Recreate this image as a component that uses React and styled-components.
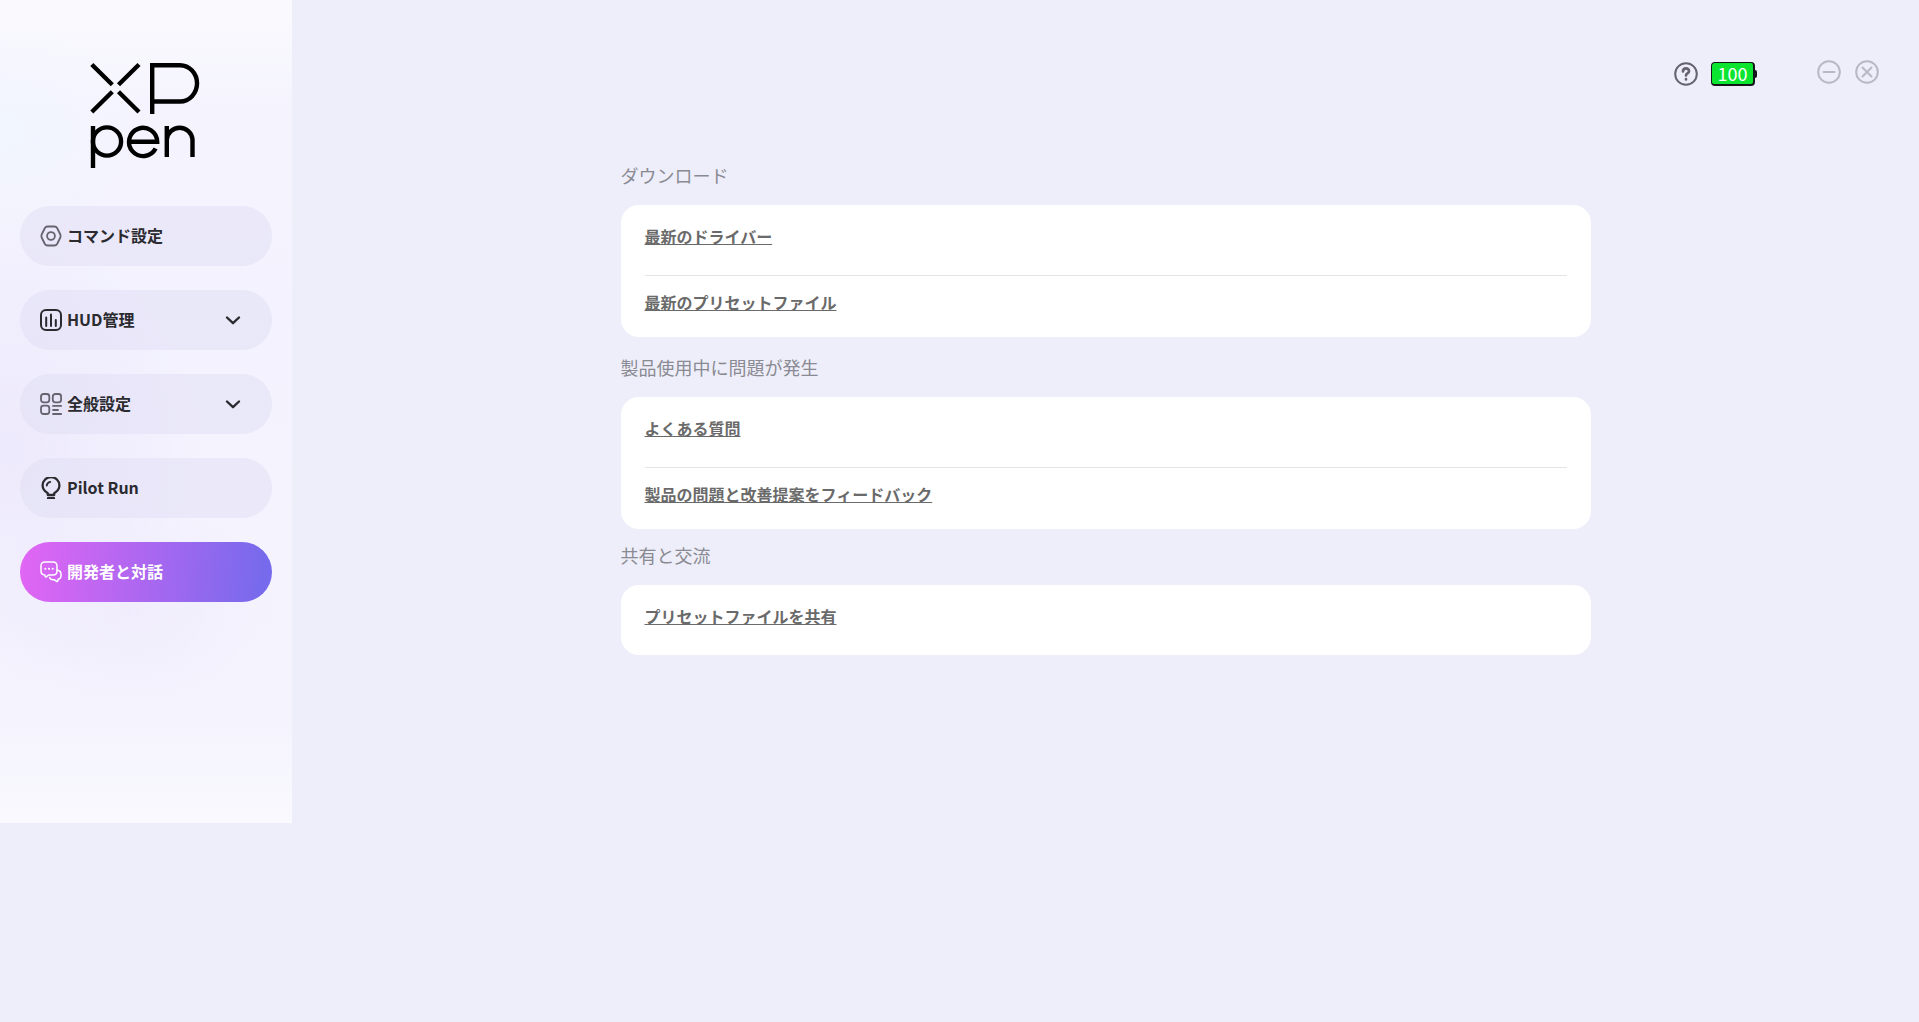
import React from "react";
import styled, { createGlobalStyle } from "styled-components";

const GlobalStyle = createGlobalStyle`
  *, *::before, *::after { box-sizing: border-box; }
  body {
    margin: 0;
    min-height: 100vh;
    background: #eeeefa;
    color: #2a2a2f;
    font-family: "Noto Sans CJK JP", "Noto Sans", sans-serif;
  }
`;

const Layout = styled.div`
  display: flex;
  align-items: flex-start;
`;

const Sidebar = styled.aside`
  flex: 0 0 292px;
  display: flex;
  flex-direction: column;
  padding: 62px 20px 221px;
  background:
    radial-gradient(ellipse 140px 110px at 0 130px, rgba(240, 246, 255, 0.8), transparent),
    radial-gradient(ellipse 190px 240px at 10px 450px, rgba(236, 231, 252, 0.8), transparent),
    radial-gradient(ellipse 150px 110px at 130px 610px, rgba(240, 235, 252, 0.8), transparent),
    linear-gradient(#fafafe 0, #f5f4fe 110px, #f3f2fe 300px, #f5f4fe 720px, #f9f9fe 823px);
`;

const Logo = styled.svg`
  display: block;
  width: 112px;
  height: 108px;
  margin: 0 auto 36px 70px;
`;

const Nav = styled.nav`
  display: flex;
  flex-direction: column;
  gap: 24px;
`;

const NavButton = styled.button`
  display: flex;
  align-items: center;
  gap: 5px;
  width: 100%;
  height: 60px;
  padding: 0 30px 0 20px;
  border: 0;
  border-radius: 30px;
  background: ${(p) =>
    p.$active ? "linear-gradient(95deg, #e066f4 2%, #ab67f0 50%, #776aec 96%)" : "rgba(224, 222, 244, 0.5)"};
  color: ${(p) => (p.$active ? "#ffffff" : "#2a2a2f")};
  font: bold 16px/24px "Noto Sans CJK JP", "Noto Sans", sans-serif;
  text-align: left;
  cursor: pointer;
`;

const NavLabel = styled.span`
  padding-bottom: 2px;
`;

const NavIcon = styled.svg`
  flex: none;
  width: 22px;
  height: 22px;
  fill: none;
  stroke: ${(p) => p.$tone};
  stroke-width: ${(p) => p.$weight || 1.8};
  stroke-linecap: round;
  stroke-linejoin: round;
`;

const Chevron = styled(NavIcon)`
  width: 18px;
  height: 18px;
  margin-left: auto;
`;

const Content = styled.div`
  flex: 1;
  min-width: 0;
`;

const TopBar = styled.header`
  display: flex;
  justify-content: flex-end;
  align-items: flex-start;
  gap: 60px;
  padding: 60px 40px 0 0;
`;

const Group = styled.div`
  display: flex;
  align-items: center;
  gap: ${(p) => p.$gap}px;
  padding: ${(p) => p.$pad || "0"};
`;

const IconButton = styled.button`
  display: flex;
  padding: 0;
  border: 0;
  background: none;
  color: ${(p) => p.$tone};
  cursor: pointer;

  svg {
    width: 24px;
    height: 24px;
    fill: none;
    stroke: currentColor;
    stroke-width: 2;
    stroke-linecap: round;
    stroke-linejoin: round;
  }
`;

const Battery = styled.div`
  display: flex;
  align-items: center;

  &::after {
    content: "";
    width: 2px;
    height: 8px;
    border-radius: 0 2px 2px 0;
    background: #16161a;
  }
`;

const BatteryLevel = styled.span`
  width: 44px;
  height: 24px;
  border: 1px solid #16161a;
  border-right-width: 2px;
  border-bottom-width: 2px;
  border-radius: 4px;
  background: #0be52f;
  color: #ffffff;
  font-size: 18px;
  line-height: 20px;
  text-align: center;
`;

const Main = styled.main`
  width: 100%;
  max-width: 970px;
  margin: 0 auto;
  padding: 75px 0 40px;
`;

const Section = styled.section`
  margin-bottom: ${(p) => p.$space}px;
`;

const Heading = styled.h2`
  margin: 0 0 16px;
  color: #8a8a92;
  font-size: 18px;
  font-weight: 400;
  line-height: 28px;
`;

const Card = styled.ul`
  margin: 0;
  padding: 0 24px;
  border-radius: 18px;
  background: #ffffff;
  list-style: none;
`;

const Row = styled.li`
  padding: 19px 0 27px;
  line-height: 24px;

  & + & {
    padding: 14px 0 23px;
    border-top: 1px solid #e4e4e6;
  }
`;

const TextLink = styled.a`
  color: #6a6a6a;
  font-size: 16px;
  font-weight: 700;
  text-decoration: underline;
  text-decoration-thickness: 1px;
  text-underline-offset: 1px;
  text-decoration-skip-ink: none;
`;

const icons = {
  command: (
    <NavIcon viewBox="0 0 22 22" $tone="#66636f" aria-hidden="true">
      <path d="M7.500 1.500h7q1.700 0 2.600 1.500l3 6q1 2 0 4l-3 6q-.9 1.500-2.600 1.500h-7q-1.700 0-2.600-1.500l-3-6q-1-2 0-4l3-6q.9-1.500 2.600-1.500Z" />
      <circle cx="11" cy="11" r="3.900" />
    </NavIcon>
  ),
  hud: (
    <NavIcon viewBox="0 0 22 22" $tone="#2a2a2f" $weight={2} aria-hidden="true">
      <rect x="1" y="1" width="20" height="20" rx="5" />
      <path d="M6.200 8.500v8.500M11 5.500V17M15.800 11v6" />
    </NavIcon>
  ),
  general: (
    <NavIcon viewBox="0 0 22 22" $tone="#66636f" aria-hidden="true">
      <rect x="1" y="1" width="8.300" height="8.300" rx="2.500" />
      <rect x="12.800" y="1" width="8.300" height="8.300" rx="2.500" />
      <rect x="1" y="12.700" width="8.300" height="8.300" rx="2.500" />
      <path d="M13 12.900h8.200M13 17h5M13 21h8.200" />
    </NavIcon>
  ),
  pilot: (
    <NavIcon viewBox="0 0 22 22" $tone="#2a2a2f" $weight={2.3} aria-hidden="true">
      <path d="M7.800 18v-1.800C5 14.500 2.600 12 2.600 8.500a8.400 8.400 0 0 1 16.800 0c0 3.500-2.400 6-5.200 7.700V18ZM8 21.200h6" />
      <path d="M6.700 8.500Q7.200 5.400 10.300 4.900" strokeWidth="1.800" />
    </NavIcon>
  ),
  talk: (
    <NavIcon viewBox="0 0 22 22" $tone="#ffffff" $weight={1.5} aria-hidden="true">
      <path d="M5 .9h8q4 0 4 4V10q0 4-4 4H8.500l-2 1.800q-.7.500-1.200-.3L4.800 14Q1 13.700 1 10V4.900q0-4 4-4Z" />
      <path d="M17.300 9.200q3.700.3 3.700 4v1.500q0 3-2.800 3.500l-.5 1.800q-.4.900-1.200.3L14.300 18.700H13q-2.800 0-3.400-2.300" />
      <path d="M5.300 7.800h.1M9 7.800h.1M12.700 7.800h.1" strokeWidth="2" />
    </NavIcon>
  ),
};

const navItems = [
  { id: "command", label: "コマンド設定" },
  { id: "hud", label: "HUD管理", expandable: true },
  { id: "general", label: "全般設定", expandable: true },
  { id: "pilot", label: "Pilot Run" },
  { id: "talk", label: "開発者と対話", active: true },
];

const sections = [
  { title: "ダウンロード", links: ["最新のドライバー", "最新のプリセットファイル"], space: 16 },
  { title: "製品使用中に問題が発生", links: ["よくある質問", "製品の問題と改善提案をフィードバック"], space: 12 },
  { title: "共有と交流", links: ["プリセットファイルを共有"], space: 0 },
];

function BrandLogo() {
  return (
    <Logo viewBox="90 62 112 108" fill="none" stroke="#000000" strokeWidth="4.4" role="img" aria-label="XPPen">
      <path d="M91.800 64.500 112.300 84.700M139 64.500 118.500 84.700M91.800 112 112.300 91.800M139 112 118.500 91.800" />
      <path d="M152.200 114V65.200H180a17 18.100 0 0 1 0 36.300H152.200" />
      <path d="M93 126v42" />
      <circle cx="107" cy="141.500" r="14.100" />
      <path d="M129 141.800h28.200A14.100 14.100 0 1 0 155.600 148.500" />
      <path d="M166.800 157v-31M166.800 157v-17.500a12.900 12.900 0 0 1 25.700 0V157" />
    </Logo>
  );
}

export default function App() {
  return (
    <>
      <GlobalStyle />
      <Layout>
        <Sidebar>
          <BrandLogo />
          <Nav>
            {navItems.map((item) => (
              <NavButton
                key={item.id}
                type="button"
                $active={item.active}
                aria-current={item.active ? "page" : undefined}
                aria-expanded={item.expandable ? false : undefined}
              >
                {icons[item.id]}
                <NavLabel>{item.label}</NavLabel>
                {item.expandable && (
                  <Chevron viewBox="0 0 18 18" $tone="#2a2a2f" $weight={2.4} aria-hidden="true">
                    <path d="m3 6.500 6 5.700 6-5.700" />
                  </Chevron>
                )}
              </NavButton>
            ))}
          </Nav>
        </Sidebar>
        <Content>
          <TopBar>
            <Group $gap={13} $pad="2px 0 0">
              <IconButton type="button" $tone="#66636f" aria-label="ヘルプ">
                <svg viewBox="0 0 24 24">
                  <circle cx="12" cy="12" r="10.800" />
                  <path d="M9 9.500c0-4 6-4 6-.3 0 2.300-3 2.200-3 4.300M12 17.200v.2" strokeWidth="2.700" />
                </svg>
              </IconButton>
              <Battery>
                <BatteryLevel>100</BatteryLevel>
              </Battery>
            </Group>
            <Group $gap={14}>
              <IconButton type="button" $tone="#b9b8c6" aria-label="最小化">
                <svg viewBox="0 0 24 24">
                  <circle cx="12" cy="12" r="10.800" />
                  <path d="M6.500 12h11" />
                </svg>
              </IconButton>
              <IconButton type="button" $tone="#b9b8c6" aria-label="閉じる">
                <svg viewBox="0 0 24 24">
                  <circle cx="12" cy="12" r="10.800" />
                  <path d="m7.500 7.500 9 9M16.500 7.500l-9 9" />
                </svg>
              </IconButton>
            </Group>
          </TopBar>
          <Main>
            {sections.map((section) => (
              <Section key={section.title} $space={section.space}>
                <Heading>{section.title}</Heading>
                <Card>
                  {section.links.map((link) => (
                    <Row key={link}>
                      <TextLink href="#">{link}</TextLink>
                    </Row>
                  ))}
                </Card>
              </Section>
            ))}
          </Main>
        </Content>
      </Layout>
    </>
  );
}
